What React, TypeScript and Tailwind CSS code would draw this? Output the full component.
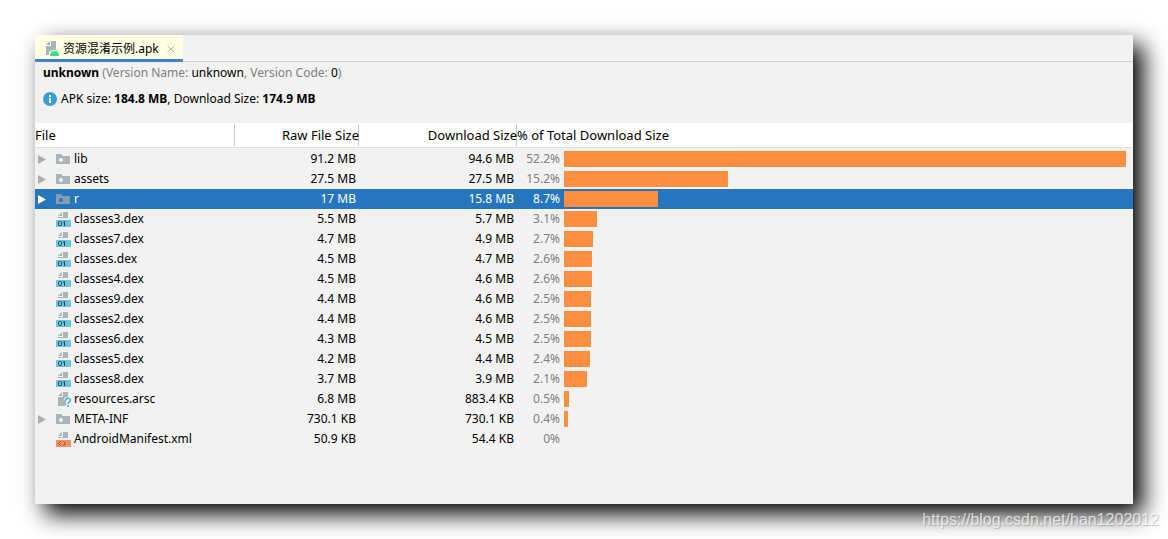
import * as React from "react";

type Kind = "folder" | "dex" | "arsc" | "xml";

type Entry = {
  name: string;
  kind: Kind;
  raw: string;
  download: string;
  percent: number;
};

const ENTRIES: Entry[] = [
  { name: "lib", kind: "folder", raw: "91.2 MB", download: "94.6 MB", percent: 52.2 },
  { name: "assets", kind: "folder", raw: "27.5 MB", download: "27.5 MB", percent: 15.2 },
  { name: "r", kind: "folder", raw: "17 MB", download: "15.8 MB", percent: 8.7 },
  { name: "classes3.dex", kind: "dex", raw: "5.5 MB", download: "5.7 MB", percent: 3.1 },
  { name: "classes7.dex", kind: "dex", raw: "4.7 MB", download: "4.9 MB", percent: 2.7 },
  { name: "classes.dex", kind: "dex", raw: "4.5 MB", download: "4.7 MB", percent: 2.6 },
  { name: "classes4.dex", kind: "dex", raw: "4.5 MB", download: "4.6 MB", percent: 2.6 },
  { name: "classes9.dex", kind: "dex", raw: "4.4 MB", download: "4.6 MB", percent: 2.5 },
  { name: "classes2.dex", kind: "dex", raw: "4.4 MB", download: "4.6 MB", percent: 2.5 },
  { name: "classes6.dex", kind: "dex", raw: "4.3 MB", download: "4.5 MB", percent: 2.5 },
  { name: "classes5.dex", kind: "dex", raw: "4.2 MB", download: "4.4 MB", percent: 2.4 },
  { name: "classes8.dex", kind: "dex", raw: "3.7 MB", download: "3.9 MB", percent: 2.1 },
  { name: "resources.arsc", kind: "arsc", raw: "6.8 MB", download: "883.4 KB", percent: 0.5 },
  { name: "META-INF", kind: "folder", raw: "730.1 KB", download: "730.1 KB", percent: 0.4 },
  { name: "AndroidManifest.xml", kind: "xml", raw: "50.9 KB", download: "54.4 KB", percent: 0 },
];

const MAX_PERCENT = Math.max(...ENTRIES.map((e) => e.percent));

function FileIcon({ kind, selected }: { kind: Kind; selected: boolean }) {
  const gray = selected ? "#849bb0" : "#aab4bb";
  return (
    <svg className="size-4 shrink-0" viewBox="0 0 16 16" aria-hidden="true">
      {kind === "folder" && (
        <>
          <path d="M1 3h5l2 2h7v8H1z" fill={gray} />
          <circle cx="6" cy="9" r="2" fill={selected ? "#2675bf" : "#f2f2f2"} />
        </>
      )}
      {(kind === "dex" || kind === "xml") && (
        <>
          <path d="M8 1h5v6H3V6h5z" fill={gray} />
          <path d="M7 1v4H3z" fill={gray} />
          <path d="M1 9h15v7H1z" fill={kind === "dex" ? "#6cc4e4" : "#f58f62"} />
        </>
      )}
      {kind === "dex" && (
        <g fill="none" stroke="#25404c">
          <rect x="3.5" y="10.5" width="3" height="4" rx="1" />
          <path d="M8 11.500l1.500-1V15" />
        </g>
      )}
      {kind === "xml" && (
        <path d="M5.5 10.5l-2 2 2 2M8.5 10.5l2 2-2 2" fill="none" stroke="#6e4331" />
      )}
      {kind === "arsc" && (
        <>
          <path d="M8 1h5v5c-3 0-4 1-4 3h2v6H3V6h5z" fill={gray} />
          <path d="M7 1v4H3z" fill={gray} />
          <path
            d="M10.7 9.5c0-3 4.6-3 4.6-.2 0 1.7-2.3 1.7-2.3 3.7M13 14v2"
            fill="none"
            stroke="#40b6e0"
            strokeWidth="1.6"
          />
        </>
      )}
    </svg>
  );
}

function Tab() {
  return (
    <div className="flex h-[27px] w-[148px] items-center border-b-3 border-[#4083c9] bg-[#ffffe4] pt-1 pl-2">
      <svg className="size-4 shrink-0" viewBox="0 0 16 16" aria-hidden="true">
        <path d="M8 0h5v9H9l-3 2v3H3V5h5z" fill="#aab4bb" />
        <path d="M7 0v4H3z" fill="#aab4bb" />
        <path
          d="M7 15c0-2 1-3.5 2-4.2L8 9.5l.6-.5 1.200 1.300q1.700-.6 3.400 0L14.400 9l.6.5-1 1.300c1 .7 2 2.200 2 4.200z"
          fill="#3ddc84"
        />
      </svg>
      <span className="ml-1 text-[12px] leading-5 whitespace-nowrap">资源混淆示例.apk</span>
      <button type="button" aria-label="Close tab" className="ml-1 flex size-4 items-center justify-center">
        <svg className="size-2" viewBox="0 0 8 8" aria-hidden="true">
          <path d="M.5.5l7 7M7.5.5l-7 7" stroke="#b4b4a4" />
        </svg>
      </button>
    </div>
  );
}

function HeaderCell({ children, align }: { children: React.ReactNode; align: string }) {
  return (
    <th scope="col" className="h-6 p-0 font-normal">
      <div className={`h-[22px] leading-[22px] whitespace-nowrap shadow-[inset_-1px_0_0_#c9c9c9] ${align}`}>
        {children}
      </div>
    </th>
  );
}

export default function App() {
  const [selected, setSelected] = React.useState("r");

  return (
    <div className="relative bg-white p-[35px] font-['Noto_Sans','Noto_Sans_CJK_SC',sans-serif] text-[12px] text-black">
      <main className="bg-[#f2f2f2] pb-[55px] shadow-[10px_10px_22px_#000]">
        <div className="flex h-[27px] shadow-[inset_0_-1px_0_#d0d0d0]">
          <Tab />
        </div>

        <div className="h-[61px] pl-2 leading-[22px]">
          <p className="text-[#808080]">
            <b className="text-black">unknown</b> (Version Name: <span className="text-black">unknown</span>, Version
            Code: <span className="text-black">0</span>)
          </p>
          <p className="mt-1 flex items-center">
            <svg className="mr-1 size-[14px]" viewBox="0 0 14 14" aria-hidden="true">
              <circle cx="7" cy="7" r="7" fill="#389fd6" />
              <path d="M6 3h2v2H6zM6 6h2v5H6z" fill="#fff" />
            </svg>
            <span>
              APK size: <b>184.8 MB</b>, Download Size: <b>174.9 MB</b>
            </span>
          </p>
        </div>

        <table className="w-full table-fixed border-collapse">
          <colgroup>
            <col className="w-[200px]" />
            <col className="w-[124px]" />
            <col className="w-[158px]" />
            <col />
          </colgroup>
          <thead>
            <tr className="bg-white text-[13px]">
              <HeaderCell align="text-left">File</HeaderCell>
              <HeaderCell align="text-right">Raw File Size</HeaderCell>
              <HeaderCell align="text-right">Download Size</HeaderCell>
              <th scope="col" className="p-0 text-left font-normal">
                <div className="h-[22px] leading-[22px]">% of Total Download Size</div>
              </th>
            </tr>
            <tr aria-hidden="true">
              <td colSpan={4} className="h-[2px] p-0 shadow-[inset_0_1px_0_#dedede]" />
            </tr>
          </thead>
          <tbody>
            {ENTRIES.map((e) => {
              const isSel = e.name === selected;
              return (
                <tr
                  key={e.name}
                  aria-selected={isSel}
                  onClick={() => setSelected(e.name)}
                  className={isSel ? "bg-[#2675bf] text-white" : ""}
                >
                  <td className="p-0">
                    <div className="flex h-5 items-center">
                      {e.kind === "folder" ? (
                        <button type="button" aria-label={`Expand ${e.name}`} className="flex w-5 pl-[3px]">
                          <svg className="h-[9px] w-2" viewBox="0 0 8 9" aria-hidden="true">
                            <path d="M0 0l8 4.5L0 9z" fill={isSel ? "#fff" : "#adadad"} />
                          </svg>
                        </button>
                      ) : (
                        <span className="w-5" />
                      )}
                      <FileIcon kind={e.kind} selected={isSel} />
                      <span className="ml-[3px] whitespace-nowrap">{e.name}</span>
                    </div>
                  </td>
                  <td className="p-0 pr-[3px] text-right">{e.raw}</td>
                  <td className="p-0 pr-[3px] text-right">{e.download}</td>
                  <td className="p-0">
                    <div className="flex h-5 items-center pr-[7px]">
                      <span className={`w-[43px] text-right ${isSel ? "text-white" : "text-[#808080]"}`}>
                        {e.percent}%
                      </span>
                      <div className="ml-1 h-4 flex-1">
                        <div
                          className="h-4 bg-[#ff8f40]"
                          style={{ width: `${(e.percent / MAX_PERCENT) * 100}%` }}
                        />
                      </div>
                    </div>
                  </td>
                </tr>
              );
            })}
          </tbody>
        </table>
      </main>

      <div className="absolute right-[9px] bottom-[7px] font-['Liberation_Sans',sans-serif] text-[16px] leading-6 text-white/70 [text-shadow:1px_1px_1px_#00000033]">
        https://blog.csdn.net/han1202012
      </div>
    </div>
  );
}
